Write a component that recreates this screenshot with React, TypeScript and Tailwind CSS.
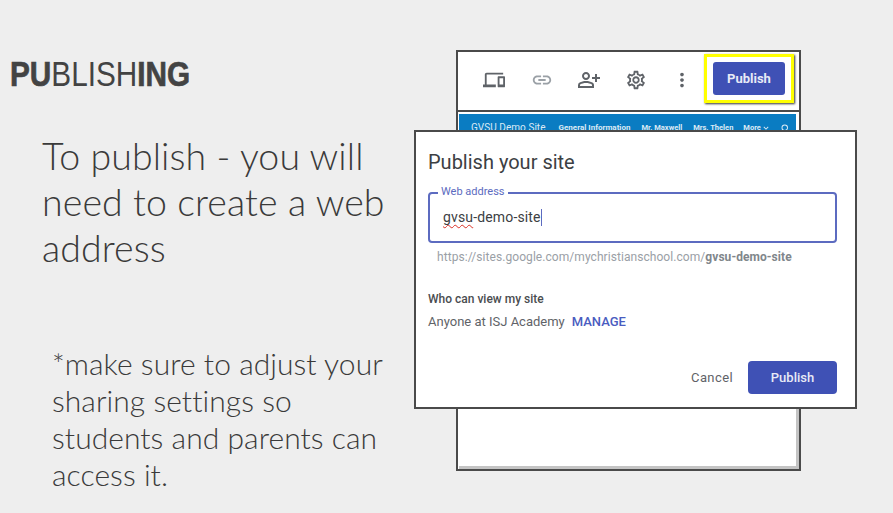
import React from "react";
import { MdOutlineDevices, MdLink, MdOutlinePersonAddAlt, MdOutlineSettings, MdMoreVert, MdSearch, MdKeyboardArrowDown } from "react-icons/md";

const App: React.FC = () => {
  return (
    <div className="w-[893px] h-[513px] bg-[#eeeeee] flex overflow-hidden font-['Lato',sans-serif] text-[#3a3a3a]">
      <div className="w-[415px] flex flex-col">
        <div className="pl-[10px] pt-[54px] h-[102px]">
          <h1 className="inline-block origin-left scale-x-[0.85] whitespace-nowrap text-[35px] leading-[40px] font-['Liberation_Sans',sans-serif] text-[#434343]">
            <span className="font-bold [-webkit-text-stroke:0.7px_#434343]">PU</span>
            <span className="font-normal">BLISH</span>
            <span className="font-bold [-webkit-text-stroke:0.7px_#434343]">ING</span>
          </h1>
        </div>
        <p className="pl-[42px] mt-[31px] text-[37.5px] leading-[46px] font-light tracking-[0.1px] w-[400px]">
          To publish - you will need to create a web address
        </p>
        <p className="pl-[52px] mt-[74px] text-[30px] leading-[37px] font-light tracking-[0.05px] w-[400px]">
          *make sure to adjust your sharing settings so students and parents can access it.
        </p>
      </div>

      <div className="relative flex-1">
        <div className="ml-[41px] mt-[50px] w-[345px] h-[421px] border-2 border-[#4a4a4a] bg-white flex flex-col">
          <div className="h-[58px] pb-[2px] flex items-center text-[#5f6368] shrink-0">
            <MdOutlineDevices className="ml-[25px] text-[22px]" />
            <MdLink className="ml-[26px] text-[22px] text-[#9aa0a6]" />
            <MdOutlinePersonAddAlt className="ml-[24px] text-[24px]" />
            <MdOutlineSettings className="ml-[24px] text-[22px]" />
            <MdMoreVert className="ml-[24px] text-[22px]" />
            <div className="ml-[11px] mb-[3px] w-[90px] h-[49px] border-[3px] border-[#ffff00] shadow-[1px_1px_2px_#333] flex items-center justify-center">
              <div className="w-[72px] h-[33px] rounded-[3px] bg-[#3f51b5] text-[#e8eaf6] text-[13px] font-bold flex items-center justify-center font-['Roboto',sans-serif]">
                Publish
              </div>
            </div>
          </div>
          <div className="h-[2px] bg-[#4a4a4a] shrink-0" />
          <div className="ml-[1px] mr-[3px] mt-[2px] h-[28px] bg-[#0a7cc2] text-[#dbeaf5] flex items-start whitespace-nowrap pt-[9px] pl-[12px] font-['Roboto',sans-serif] text-[8px] leading-[10px] font-bold shrink-0">
            <span className="text-[10px] font-normal leading-[10px] tracking-[0.05px]">GVSU Demo Site</span>
            <span className="ml-[13px]">General Information</span>
            <span className="ml-[11px] text-[7.5px]">Mr. Maxwell</span>
            <span className="ml-[11px] text-[7.5px]">Mrs. Thelen</span>
            <span className="ml-[10px] text-[7.5px] flex items-center">More<MdKeyboardArrowDown className="text-[10px]" /></span>
            <MdSearch className="ml-[9px] text-[12px]" />
          </div>
          <div className="flex-1 border-r-[3px] border-r-[#c4c4c4]" />
          <div className="h-[3px] bg-[#c4c4c4] ml-[1px]" />
        </div>

        <div className="absolute -left-[1px] top-[130px] w-[443px] h-[279px] border-2 border-[#4a4a4a] bg-white font-['Roboto',sans-serif] flex flex-col">
          <h2 className="pl-[12px] pt-[18px] text-[20px] leading-[24px] text-[#3c4043]">Publish your site</h2>
          <div className="relative ml-[12px] mt-[18px] w-[409px] h-[51px] border-2 border-[#5c6bc0] rounded-[4px] flex items-center pl-[13px]">
            <span className="absolute -top-[8px] left-[8px] bg-white px-[3px] text-[11px] leading-[12px] text-[#5c6bc0]">Web address</span>
            <span className="text-[14px] tracking-[0.15px] text-[#3c4043] underline decoration-wavy decoration-[#d93025] decoration-1 underline-offset-2 [text-decoration-skip-ink:none]">gvsu</span>
            <span className="text-[14px] tracking-[0.15px] text-[#3c4043]">-demo-site</span>
            <span className="w-px h-[17px] bg-[#5c6bc0]" />
          </div>
          <p className="pl-[21px] mt-[6px] text-[12px] tracking-[0.06px] leading-[16px] text-[#9aa0a6]">
            https://sites.google.com/mychristianschool.com/<span className="font-bold text-[#80868b]">gvsu-demo-site</span>
          </p>
          <p className="pl-[12px] mt-[27px] text-[12px] leading-[14px] font-medium text-[#4a4d50]">Who can view my site</p>
          <p className="pl-[12px] mt-[8px] text-[13px] leading-[16px] text-[#5f6368]">
            Anyone at ISJ Academy<span className="ml-[7px] font-medium text-[#4a5cc0]">MANAGE</span>
          </p>
          <div className="flex items-center justify-end mt-[31px] pr-[18px]">
            <span className="text-[13px] text-[#5f6368] tracking-[0.4px]">Cancel</span>
            <div className="ml-[15px] w-[89px] h-[33px] rounded-[4px] bg-[#3f51b5] text-[#e8eaf6] text-[13px] font-medium flex items-center justify-center">Publish</div>
          </div>
        </div>
      </div>
    </div>
  );
};

export default App;
